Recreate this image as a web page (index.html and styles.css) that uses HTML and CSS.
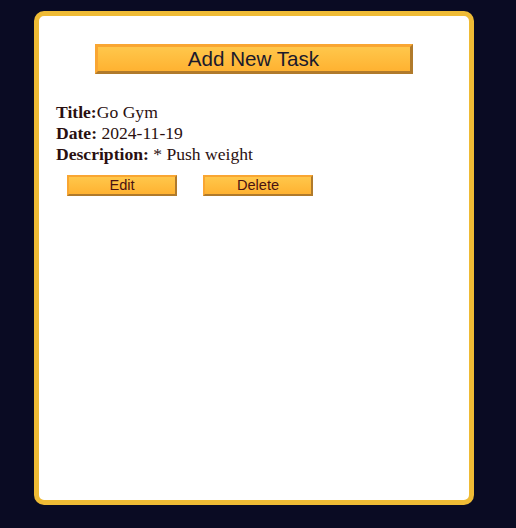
FILE: index.html
```html
<!DOCTYPE html>
<html>
<head>
<meta charset="utf-8">
<link rel="stylesheet" href="styles.css">
</head>
<body>
<div class="card">
  <div class="top">
    <button class="add-btn">Add New Task</button>
  </div>
  <div class="task">
    <div class="line"><b>Title:</b>Go Gym</div>
    <div class="line"><b>Date:</b> 2024-11-19</div>
    <div class="line"><b>Description:</b> * Push weight</div>
    <div class="actions">
      <button class="small-btn">Edit</button>
      <button class="small-btn">Delete</button>
    </div>
  </div>
</div>
</body>
</html>
```
FILE: styles.css
```css
html, body {
  margin: 0;
  padding: 0;
  background: #0a0b23;
}
body {
  padding: 11px 0 0 34px;
  height: 528px;
  box-sizing: border-box;
}
.card {
  width: 440px;
  height: 494px;
  box-sizing: border-box;
  background: #ffffff;
  border: 5px solid #efbb35;
  border-radius: 10px;
  padding: 28px 17px 0 17px;
}
.top {
  display: flex;
  justify-content: center;
}
.add-btn {
  width: 318px;
  height: 30px;
  box-sizing: border-box;
  margin-left: -18px;
  margin-right: -17px;
  padding: 0;
  font-family: "Liberation Sans", Arial, sans-serif;
  font-size: 20.6px;
  color: #1b1a2c;
  background: linear-gradient(#ffc74b, #ffb231);
  border: 3px solid;
  border-color: #f9a632 #b07a2b #b07a2b #f9a632;
  cursor: pointer;
}
.task {
  margin-top: 28px;
  font-family: "Liberation Serif", "Times New Roman", serif;
  font-size: 17.6px;
  line-height: 21px;
  color: #2a1010;
}
.line b {
  font-weight: bold;
}
.actions {
  display: flex;
  gap: 26px;
  margin-top: 10px;
  padding-left: 11px;
}
.small-btn {
  width: 110px;
  height: 21px;
  box-sizing: border-box;
  padding: 0;
  font-family: "Liberation Sans", Arial, sans-serif;
  font-size: 14.6px;
  line-height: 17px;
  color: #4a1212;
  background: linear-gradient(#ffc74b, #ffb231);
  border: 2px solid;
  border-color: #f9a632 #b07a2b #b07a2b #f9a632;
  cursor: pointer;
}
```
